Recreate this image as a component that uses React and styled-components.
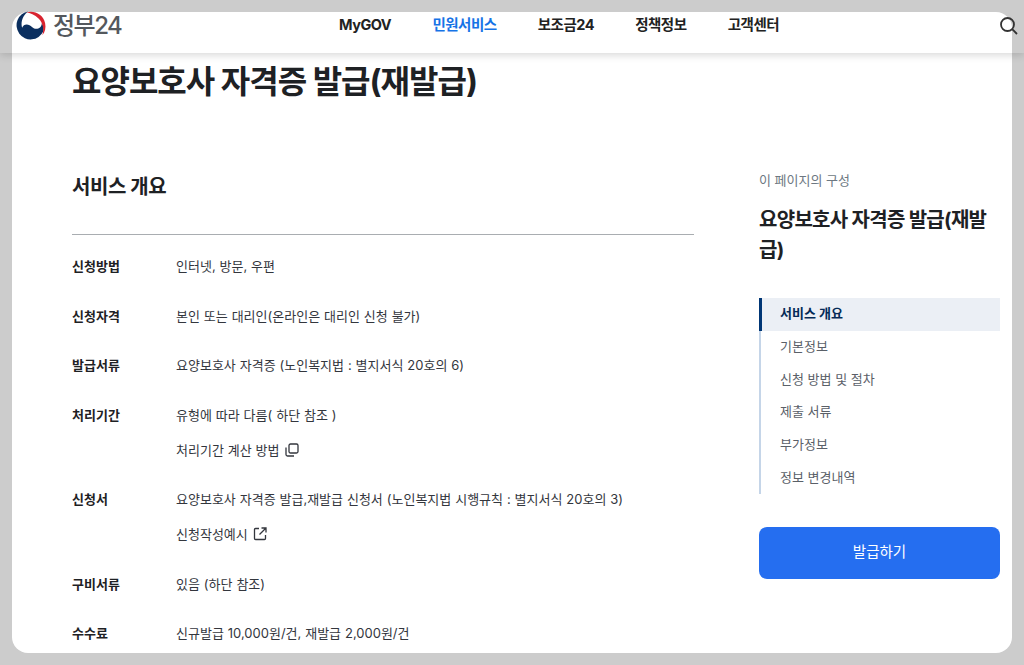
import React from 'react';
import styled, { createGlobalStyle } from 'styled-components';

const GlobalStyle = createGlobalStyle`
  html, body {
    margin: 0;
    padding: 0;
    background: #cccccc;
  }
  body {
    font-family: 'Inter', 'Noto Sans CJK KR', sans-serif;
    color: #1e2124;
  }
`;

const Page = styled.div`
  position: relative;
  width: 1024px;
  height: 665px;
  box-sizing: border-box;
  padding: 12px;
  overflow: hidden;
  background: #cccccc;
`;

const Card = styled.main`
  width: 1000px;
  height: 641px;
  box-sizing: border-box;
  padding: 50px 12px 0 60px;
  background: #ffffff;
  border-radius: 16px;
  overflow: hidden;
`;

const Header = styled.header`
  position: absolute;
  top: 0;
  left: 0;
  right: 0;
  height: 53px;
  box-shadow: 0 2px 8px rgba(0, 0, 0, 0.16);
`;

const Logo = styled.div`
  position: absolute;
  left: 16px;
  top: 10px;
  display: flex;
  align-items: center;
  gap: 6px;
`;

const LogoText = styled.span`
  font-size: 24px;
  line-height: 30px;
  color: #54585d;
  letter-spacing: -1.5px;
  font-weight: 500;
`;

const Nav = styled.nav`
  position: absolute;
  left: 339px;
  top: 15px;
  display: flex;
  gap: 41.2px;
`;

const NavLink = styled.a`
  font-size: 14.5px;
  line-height: 20px;
  font-weight: 700;
  letter-spacing: -0.5px;
  color: ${(props) => (props.$active ? '#1673e6' : '#222222')};
`;

const SearchButton = styled.div`
  position: absolute;
  left: 999px;
  top: 16px;
  width: 19px;
  height: 19px;
  color: #333333;
`;

const Title = styled.h1`
  margin: 0;
  font-size: 32px;
  line-height: 40px;
  font-weight: 700;
  letter-spacing: -1px;
  color: #1e2124;
`;

const Columns = styled.div`
  display: flex;
  margin-top: 71px;
`;

const Content = styled.section`
  width: 622px;
  flex: none;
`;

const SectionTitle = styled.h2`
  margin: 0;
  padding-bottom: 33px;
  font-size: 20px;
  line-height: 28px;
  font-weight: 700;
  letter-spacing: -0.4px;
  border-bottom: 1px solid #a9adb1;
`;

const InfoList = styled.dl`
  margin: 19px 0 0;
`;

const InfoRow = styled.div`
  display: flex;
  margin-bottom: 25.5px;
`;

const Label = styled.dt`
  width: 104px;
  flex: none;
  font-size: 13px;
  line-height: 24px;
  font-weight: 700;
`;

const Value = styled.dd`
  margin: 0;
  display: flex;
  flex-direction: column;
  gap: 11px;
  font-size: 13px;
  line-height: 24px;
  word-spacing: 0.25px;
  color: #33363d;
`;

const LinkLine = styled.span`
  display: flex;
  align-items: center;
  gap: 5px;
`;

const Aside = styled.aside`
  width: 241px;
  flex: none;
  margin-left: 65px;
  margin-top: -3px;
`;

const AsideCaption = styled.p`
  margin: 0;
  font-size: 13px;
  line-height: 20px;
  color: #6d7882;
`;

const AsideTitle = styled.h3`
  margin: 15px 0 0;
  font-size: 20px;
  line-height: 30px;
  font-weight: 700;
  letter-spacing: -0.7px;
  color: #1e2124;
`;

const SideNav = styled.ul`
  list-style: none;
  margin: 33px 0 0;
  padding: 0;
  border-left: 2px solid #c5d5e8;
`;

const SideItem = styled.li`
  height: 32.7px;
  margin-left: -2px;
  box-sizing: border-box;
  padding: 0 0 3px 18px;
  display: flex;
  align-items: center;
  font-size: 13px;
  font-weight: ${(props) => (props.$active ? 700 : 400)};
  color: ${(props) => (props.$active ? '#052b57' : '#5a6068')};
  background: ${(props) => (props.$active ? '#ebeff5' : 'transparent')};
  border-left: 3px solid ${(props) => (props.$active ? '#003675' : 'transparent')};
`;

const IssueButton = styled.button`
  display: block;
  width: 241px;
  height: 52px;
  margin-top: 33px;
  padding: 0 0 5px;
  border: none;
  border-radius: 8px;
  background: #256ef0;
  color: #ffffff;
  font-family: inherit;
  font-size: 14.5px;
  font-weight: 400;
`;

const Taegeuk = () => (
  <svg width="31" height="31" viewBox="0 -1 33 33" aria-hidden="true">
    <path d="M13 .5A15 15 0 1 0 29 22C30 18 29 15 27.500 13 27 19 21 21 17 17 14 13.500 8 13 6.500 18 4.500 11 8 4 13 .5Z" fill="#0b2f5f" />
    <path d="M11 1.500C19-1 29 3 31 13 32 18 31 22 28 26 30 20 29 13 24 8 20 4 15 2.500 11 1.500Z" fill="#d8232f" />
  </svg>
);

const SearchIcon = () => (
  <svg viewBox="0 0 19 19" width="19" height="19" fill="none" stroke="currentColor" strokeWidth="1.8" aria-hidden="true">
    <circle cx="8.500" cy="8.500" r="6.500" />
    <path d="M13.200 13.200L18 18" />
  </svg>
);

const CopyIcon = () => (
  <svg viewBox="0 0 14 14" width="14" height="14" fill="none" stroke="#33363d" strokeWidth="1.300" aria-hidden="true">
    <rect x="4" y="1" width="9" height="9" rx="1.500" />
    <path d="M1 4.500V11.500a1.500 1.500 0 0 0 1.500 1.500H9" />
  </svg>
);

const ExternalIcon = () => (
  <svg viewBox="0 0 14 14" width="14" height="14" fill="none" stroke="#33363d" strokeWidth="1.300" aria-hidden="true">
    <path d="M6 1.500H2.500a1 1 0 0 0-1 1v9a1 1 0 0 0 1 1h9a1 1 0 0 0 1-1V8" />
    <path d="M8.500 1H13V5.500M13 1L6.500 7.500" />
  </svg>
);

const navLinks = ['MyGOV', '민원서비스', '보조금24', '정책정보', '고객센터'];
const sideItems = ['서비스 개요', '기본정보', '신청 방법 및 절차', '제출 서류', '부가정보', '정보 변경내역'];

const App = () => (
  <Page>
    <GlobalStyle />
    <Card>
      <Title>요양보호사 자격증 발급(재발급)</Title>
      <Columns>
        <Content>
          <SectionTitle>서비스 개요</SectionTitle>
          <InfoList>
            <InfoRow>
              <Label>신청방법</Label>
              <Value>인터넷, 방문, 우편</Value>
            </InfoRow>
            <InfoRow>
              <Label>신청자격</Label>
              <Value>본인 또는 대리인(온라인은 대리인 신청 불가)</Value>
            </InfoRow>
            <InfoRow>
              <Label>발급서류</Label>
              <Value>요양보호사 자격증 (노인복지법 : 별지서식 20호의 6)</Value>
            </InfoRow>
            <InfoRow>
              <Label>처리기간</Label>
              <Value>
                <span>유형에 따라 다름( 하단 참조 )</span>
                <LinkLine>처리기간 계산 방법 <CopyIcon /></LinkLine>
              </Value>
            </InfoRow>
            <InfoRow>
              <Label>신청서</Label>
              <Value>
                <span>요양보호사 자격증 발급,재발급 신청서 (노인복지법 시행규칙 : 별지서식 20호의 3)</span>
                <LinkLine>신청작성예시 <ExternalIcon /></LinkLine>
              </Value>
            </InfoRow>
            <InfoRow>
              <Label>구비서류</Label>
              <Value>있음 (하단 참조)</Value>
            </InfoRow>
            <InfoRow>
              <Label>수수료</Label>
              <Value>신규발급 10,000원/건, 재발급 2,000원/건</Value>
            </InfoRow>
          </InfoList>
        </Content>
        <Aside>
          <AsideCaption>이 페이지의 구성</AsideCaption>
          <AsideTitle>요양보호사 자격증 발급(재발급)</AsideTitle>
          <SideNav>
            {sideItems.map((item, index) => (
              <SideItem key={item} $active={index === 0}>{item}</SideItem>
            ))}
          </SideNav>
          <IssueButton type="button">발급하기</IssueButton>
        </Aside>
      </Columns>
    </Card>
    <Header>
      <Logo>
        <Taegeuk />
        <LogoText>정부24</LogoText>
      </Logo>
      <Nav>
        {navLinks.map((link) => (
          <NavLink key={link} $active={link === '민원서비스'}>{link}</NavLink>
        ))}
      </Nav>
      <SearchButton><SearchIcon /></SearchButton>
    </Header>
  </Page>
);

export default App;
